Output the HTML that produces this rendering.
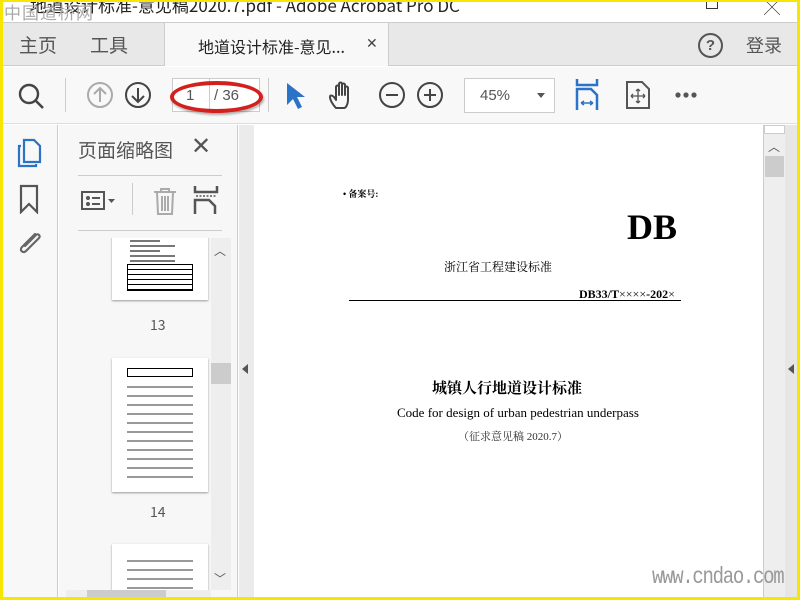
<!DOCTYPE html>
<html><head><meta charset="utf-8"><style>
*{margin:0;padding:0;box-sizing:border-box}
body{width:800px;height:600px;overflow:hidden;position:relative;background:#fff;font-family:"Liberation Sans","Noto Sans CJK SC",sans-serif}
.a{position:absolute}
.cj{font-family:"Noto Sans CJK SC",sans-serif}
.se{font-family:"Liberation Serif","Noto Serif CJK SC",serif;color:#000}
.ln{position:absolute;height:2px;background:#777}
</style></head><body>
<div class="a cj" style="left:30px;top:-8px;font-size:17px;color:#222;white-space:nowrap">地道设计标准-意见稿2020.7.pdf - Adobe Acrobat Pro DC</div>
<div class="a cj" style="left:4px;top:-1px;font-size:17px;color:#aaa;letter-spacing:1px">中国道桥网</div>
<div class="a" style="left:706px;top:0;width:12px;height:9px;border:1px solid #333;border-top:none"></div>
<div class="a" style="left:764px;top:-6px;font-size:16px;color:#333">╳</div>
<div class="a" style="left:3px;top:22px;width:794px;height:44px;background:#e8e8e8;border-top:1px solid #ccc;border-bottom:1px solid #ccc"></div>
<div class="a" style="left:164px;top:23px;width:225px;height:43px;background:#f8f8f8;border-left:1px solid #ccc;border-right:1px solid #ccc"></div>
<div class="a cj" style="left:19px;top:31px;font-size:19px;color:#555">主页</div>
<div class="a cj" style="left:90px;top:31px;font-size:19px;color:#555">工具</div>
<div class="a cj" style="left:198px;top:34px;font-size:16px;color:#222">地道设计标准-意见...</div>
<div class="a" style="left:366px;top:35px;font-size:14px;color:#444">✕</div>
<div class="a" style="left:698px;top:33px;width:25px;height:25px;border:2px solid #555;border-radius:50%;text-align:center;font-size:15px;font-weight:bold;color:#555;line-height:21px">?</div>
<div class="a cj" style="left:746px;top:32px;font-size:18px;color:#555">登录</div>
<div class="a" style="left:3px;top:67px;width:794px;height:57px;background:#f8f8f8;border-bottom:1px solid #ddd"></div>
<svg class="a" style="left:15px;top:80px" width="32" height="32"><circle cx="14" cy="14" r="9" fill="none" stroke="#444" stroke-width="2.4"/><line x1="21" y1="21" x2="28" y2="28" stroke="#444" stroke-width="2.6"/></svg>
<div class="a" style="left:65px;top:78px;width:1px;height:34px;background:#ccc"></div>
<svg class="a" style="left:86px;top:81px" width="28" height="28"><circle cx="14" cy="14" r="12" fill="none" stroke="#aaa" stroke-width="2"/><path d="M14 21V7M8 13l6-6 6 6" fill="none" stroke="#aaa" stroke-width="2"/></svg>
<svg class="a" style="left:124px;top:81px" width="28" height="28"><circle cx="14" cy="14" r="12" fill="none" stroke="#444" stroke-width="2"/><path d="M14 7v14M8 15l6 6 6-6" fill="none" stroke="#444" stroke-width="2"/></svg>
<div class="a" style="left:172px;top:78px;width:88px;height:34px;background:#fff;border:1px solid #ccc"></div>
<div class="a" style="left:209px;top:78px;width:1px;height:34px;background:#ccc"></div>
<div class="a" style="left:186px;top:87px;font-size:15px;color:#555">1</div>
<div class="a" style="left:214px;top:87px;font-size:15px;color:#555">/ 36</div>
<div class="a" style="left:170px;top:81px;width:93px;height:32px;border:4px solid #d4201c;border-radius:50%;box-shadow:1px 2px 2px rgba(0,0,0,.3)"></div>
<div class="a" style="left:268px;top:78px;width:1px;height:34px;background:#ccc"></div>
<svg class="a" style="left:284px;top:81px" width="22" height="30"><path d="M3 2v22l6-6 5 10 4-2-5-10h8z" fill="#2a73c6"/></svg>
<svg class="a" style="left:328px;top:80px" width="30" height="32"><path d="M8 28c-3-3-6-8-6-11 0-2 2-2 4 0l2 3V7c0-2 3-2 3 0v8V4c0-2 3-2 3 0v11V5c0-2 3-2 3 0v10V8c0-2 3-2 3 0v12c0 4-2 8-4 8z" fill="none" stroke="#444" stroke-width="2" stroke-linejoin="round"/></svg>
<svg class="a" style="left:378px;top:81px" width="28" height="28"><circle cx="14" cy="14" r="12" fill="none" stroke="#444" stroke-width="2"/><path d="M8 14h12" stroke="#444" stroke-width="2"/></svg>
<svg class="a" style="left:416px;top:81px" width="28" height="28"><circle cx="14" cy="14" r="12" fill="none" stroke="#444" stroke-width="2"/><path d="M8 14h12M14 8v12" stroke="#444" stroke-width="2"/></svg>
<div class="a" style="left:464px;top:78px;width:91px;height:35px;background:#fff;border:1px solid #ccc"></div>
<div class="a" style="left:480px;top:87px;font-size:15px;color:#555">45%</div>
<div class="a" style="left:537px;top:93px;border:4px solid transparent;border-top:5px solid #555"></div>
<svg class="a" style="left:575px;top:79px" width="26" height="32"><path d="M2 0v6h20V0" fill="none" stroke="#2a73c6" stroke-width="2.5"/><path d="M2 31V10h14l6 6v15" fill="none" stroke="#2a73c6" stroke-width="2.5"/><path d="M6 24h12M6 24l3-2M6 24l3 2M18 24l-3-2M18 24l-3 2" stroke="#2a73c6" stroke-width="1.5"/></svg>
<svg class="a" style="left:626px;top:81px" width="24" height="28"><path d="M1 1h15l7 7v19H1z" fill="none" stroke="#555" stroke-width="2"/><path d="M12 8v14M5 15h14M12 8l-2 2M12 8l2 2M12 22l-2-2M12 22l2-2M5 15l2-2M5 15l2 2M19 15l-2-2M19 15l-2 2" stroke="#555" stroke-width="1.3"/></svg>
<svg class="a" style="left:674px;top:91px" width="24" height="8"><circle cx="4" cy="4" r="2.6" fill="#555"/><circle cx="12" cy="4" r="2.6" fill="#555"/><circle cx="20" cy="4" r="2.6" fill="#555"/></svg>
<div class="a" style="left:3px;top:125px;width:55px;height:472px;background:#f8f8f8;border-right:1px solid #ccc"></div>
<svg class="a" style="left:17px;top:138px" width="28" height="30"><path d="M4 8H2v20h17v-2" fill="none" stroke="#2a73c6" stroke-width="2.2"/><path d="M7 2h10l6 6v16H7z" fill="none" stroke="#2a73c6" stroke-width="2.2"/></svg>
<svg class="a" style="left:19px;top:184px" width="22" height="30"><path d="M2 2h16v26l-8-8-8 8z" fill="none" stroke="#555" stroke-width="2.2"/></svg>
<svg class="a" style="left:15px;top:228px" width="30" height="30"><path d="M20 6L7 19c-3 3 1 7 4 4l13-13c2-2-1-5-3-3L10 18" fill="none" stroke="#666" stroke-width="2.2" stroke-linecap="round"/></svg>
<div class="a" style="left:59px;top:125px;width:179px;height:472px;background:#f7f7f7;border-right:1px solid #ccc"></div>
<div class="a cj" style="left:78px;top:136px;font-size:19px;color:#555">页面缩略图</div>
<div class="a" style="left:191px;top:132px;font-size:24px;color:#555">✕</div>
<div class="a" style="left:78px;top:175px;width:144px;height:1px;background:#ccc"></div>
<div class="a" style="left:78px;top:230px;width:144px;height:1px;background:#ccc"></div>
<svg class="a" style="left:80px;top:187px" width="40" height="28"><rect x="2" y="5" width="22" height="17" fill="none" stroke="#555" stroke-width="2"/><circle cx="8" cy="11" r="2" fill="#555"/><circle cx="8" cy="17" r="2" fill="#555"/><path d="M12 11h8M12 17h8" stroke="#555" stroke-width="2"/><path d="M28 12h7l-3.5 4z" fill="#555"/></svg>
<div class="a" style="left:132px;top:183px;width:1px;height:32px;background:#ccc"></div>
<svg class="a" style="left:151px;top:186px" width="28" height="30"><path d="M3 6h22M10 6V3h8v3M6 6l1 22h14l1-22M11 10v15M14 10v15M17 10v15" fill="none" stroke="#aaa" stroke-width="2"/></svg>
<svg class="a" style="left:193px;top:186px" width="26" height="30"><path d="M2 0v6h22V0M2 28V14h14l6 6v8" fill="none" stroke="#555" stroke-width="2.5"/><path d="M3 10h20" stroke="#555" stroke-width="1.5" stroke-dasharray="2 1.5"/></svg>
<div class="a" style="left:78px;top:238px;width:133px;height:359px;overflow:hidden">
 <div class="a" style="left:34px;top:-6px;width:96px;height:68px;background:#fff;box-shadow:0 1px 2px #999">
  <div class="ln" style="left:18px;top:8px;width:30px"></div><div class="ln" style="left:18px;top:13px;width:45px"></div><div class="ln" style="left:18px;top:18px;width:30px"></div><div class="ln" style="left:18px;top:23px;width:45px"></div><div class="ln" style="left:18px;top:28px;width:45px"></div>
  <div class="a" style="left:15px;top:32px;width:66px;height:27px;border:1px solid #000;background:repeating-linear-gradient(#fff 0 4px,#000 4px 5px)"></div>
 </div>
 <div class="a cj" style="left:72px;top:77px;font-size:14px;color:#555">13</div>
 <div class="a" style="left:34px;top:120px;width:96px;height:134px;background:#fff;box-shadow:0 1px 2px #999">
  <div class="a" style="left:15px;top:10px;width:66px;height:9px;border:1px solid #000"></div>
  <div class="a" style="left:15px;top:24px;width:66px;height:100px;background:repeating-linear-gradient(transparent 0 4px,#999 4px 6px,transparent 6px 9px)"></div>
 </div>
 <div class="a cj" style="left:72px;top:264px;font-size:14px;color:#555">14</div>
 <div class="a" style="left:34px;top:306px;width:96px;height:80px;background:#fff;box-shadow:0 1px 2px #999">
  <div class="a" style="left:15px;top:12px;width:66px;height:60px;background:repeating-linear-gradient(transparent 0 4px,#999 4px 6px,transparent 6px 9px)"></div>
 </div>
</div>
<div class="a" style="left:211px;top:238px;width:20px;height:352px;background:#eee"></div>
<div class="a" style="left:214px;top:242px;font-size:12px;color:#555">︿</div>
<div class="a" style="left:211px;top:363px;width:20px;height:21px;background:#ccc"></div>
<div class="a" style="left:214px;top:570px;font-size:12px;color:#555">﹀</div>
<div class="a" style="left:66px;top:590px;width:145px;height:7px;background:#eee"></div>
<div class="a" style="left:87px;top:590px;width:79px;height:7px;background:#ccc"></div>
<div class="a" style="left:239px;top:125px;width:15px;height:472px;background:#ebebeb"></div>
<div class="a" style="left:242px;top:364px;border:5px solid transparent;border-right:6px solid #555;border-left:none"></div>
<div class="a" style="left:254px;top:125px;width:509px;height:472px;background:#fff"></div>
<div class="a se" style="left:343px;top:187px;font-size:9px;font-weight:bold">• 备案号:</div>
<div class="a se" style="left:627px;top:206px;font-size:36px;font-weight:bold">DB</div>
<div class="a se" style="left:444px;top:258px;font-size:12px">浙江省工程建设标准</div>
<div class="a se" style="left:579px;top:287px;font-size:12px;font-weight:bold">DB33/T<span style="font-weight:normal">××××</span>-202<span style="font-weight:normal">×</span></div>
<div class="a" style="left:349px;top:300px;width:332px;height:1px;background:#000"></div>
<div class="a se" style="left:432px;top:377px;font-size:15px;font-weight:bold">城镇人行地道设计标准</div>
<div class="a se" style="left:397px;top:405px;font-size:13px">Code for design of urban pedestrian underpass</div>
<div class="a se" style="left:458px;top:428px;font-size:11px;color:#333">（征求意见稿 2020.7）</div>
<div class="a" style="left:763px;top:125px;width:22px;height:472px;background:#eee;border-left:1px solid #ccc"></div>
<div class="a" style="left:764px;top:125px;width:21px;height:9px;background:#fff;border:1px solid #ccc"></div>
<div class="a" style="left:768px;top:138px;font-size:12px;color:#555">︿</div>
<div class="a" style="left:765px;top:156px;width:19px;height:21px;background:#ccc"></div>
<div class="a" style="left:785px;top:125px;width:12px;height:472px;background:#e6e6e6"></div>
<div class="a" style="left:788px;top:364px;border:5px solid transparent;border-right:6px solid #555;border-left:none"></div>
<div class="a" style="left:652px;top:566px;font-family:'Liberation Mono',monospace;font-size:19px;color:#999;transform:scaleY(1.2);letter-spacing:-1.3px">www.cndao.com</div>
<div class="a" style="left:0;top:0;width:800px;height:600px;border:3px solid #f7e600;border-top-width:2px"></div>
</body></html>
